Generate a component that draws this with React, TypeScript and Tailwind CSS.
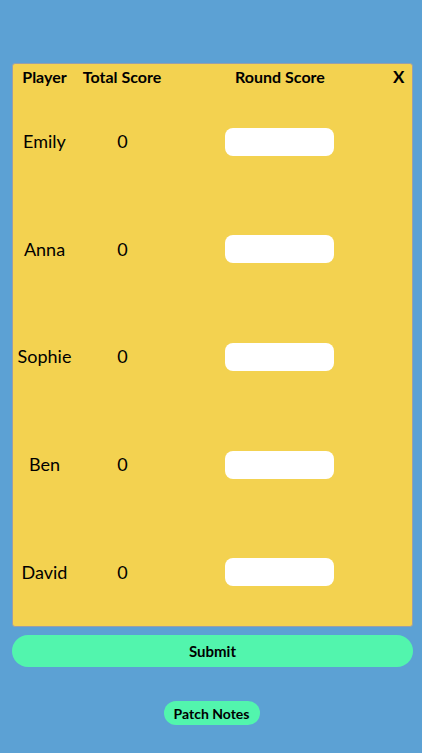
import React from "react";

const players = ["Emily", "Anna", "Sophie", "Ben", "David"];

export default function App() {
  return (
    <div
      className="min-h-[753px] w-full bg-[#5ca1d4] pl-[12px] pr-[9px] pt-[63px] flex flex-col items-center text-black"
      style={{ fontFamily: "Lato, 'Noto Sans', sans-serif" }}
    >
      <div className="w-full h-[564px] bg-[#f3d250] border border-[#9a9fa8] rounded-[3px] flex flex-col">
        <div className="grid grid-cols-[63px_92px_224px_1fr] h-[24px] items-center text-[16px] font-bold">
          <div className="text-center">Player</div>
          <div className="text-center">Total Score</div>
          <div className="text-center">Round Score</div>
          <div className="pl-[1px] text-[17px]">X</div>
        </div>
        {players.map((p) => (
          <div
            key={p}
            className="grid grid-cols-[63px_92px_224px_1fr] flex-1 items-center text-[18px]"
          >
            <div className="text-center">{p}</div>
            <div className="text-center pl-[1px]">0</div>
            <div className="flex justify-center pr-[2px]">
              <div className="w-[109px] h-[28px] bg-white rounded-[8px]" />
            </div>
            <div />
          </div>
        ))}
      </div>
      <button className="mt-[8px] w-full h-[32px] rounded-full bg-[#52f5ad] text-[15px] font-bold">
        Submit
      </button>
      <button className="mt-[34px] mr-[2px] w-[96px] h-[24px] rounded-full bg-[#52f5ad] text-[14px] font-bold">
        Patch Notes
      </button>
    </div>
  );
}
